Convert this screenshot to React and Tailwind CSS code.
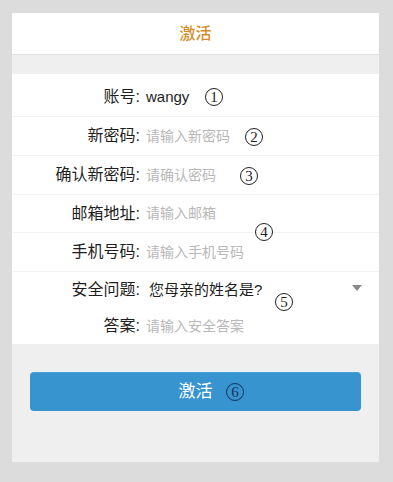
import React from 'react';

const cjk = { fontFamily: '"Liberation Sans", "Noto Sans CJK SC", sans-serif' };
const serif = { fontFamily: '"Liberation Serif", "DejaVu Serif", serif' };

const rows = [
  { label: '账号', value: 'wangy', h: 'h-[39px]' },
  { label: '新密码', placeholder: '请输入新密码', h: 'h-[39px]' },
  { label: '确认新密码', placeholder: '请确认密码', h: 'h-[39px]' },
  { label: '邮箱地址', placeholder: '请输入邮箱', h: 'h-[38px]' },
  { label: '手机号码', placeholder: '请输入手机号码', h: 'h-[39px]' },
  { label: '安全问题', value: '您母亲的姓名是?', h: 'h-[36px]', select: true },
  { label: '答案', placeholder: '请输入安全答案', h: 'h-[36px]', last: true },
];

// circled step number drawn over the form
const Mark = ({ n, className }) => (
  <span
    className={`absolute w-[18px] h-[18px] rounded-full border border-current flex items-center justify-center text-[15px] leading-none ${className}`}
    style={serif}
  >
    {n}
  </span>
);

export default function App() {
  return (
    <div className="w-[393px] h-[482px] bg-[#dcdcdc] pt-[13px] pl-[12px]" style={cjk}>
      <div className="relative w-[367px] h-[449px] bg-[#efefef] flex flex-col">
        {/* Header */}
        <div className="h-[42px] bg-white border-b border-[#e2e2e2] flex items-center justify-center">
          <span className="text-[16px] font-medium text-[#d68d28]">激活</span>
        </div>

        <div className="h-[19px]" />

        {/* Form */}
        <div className="bg-white pt-[4px]">
          {rows.map((r) => (
            <div
              key={r.label}
              className={`${r.h} flex items-center ${r.last || r.select ? '' : 'border-b border-[#f3f3f3]'}`}
            >
              <div className="w-[128px] text-right text-[16px] text-[#1e1e1e]">{r.label}:</div>
              <div className="ml-[6px] flex-1 flex items-center">
                {r.value ? (
                  <span className={`text-[15px] text-[#1e1e1e] ${r.select ? 'ml-[3px]' : ''}`}>{r.value}</span>
                ) : (
                  <span className="text-[14px] text-[#b8b8b8]">{r.placeholder}</span>
                )}
              </div>
              {r.select && (
                <svg width="10" height="6" viewBox="0 0 10 6" className="mr-[17px] -mt-[4px]">
                  <path d="M0 0 L10 0 L5 6 Z" fill="#8a8a8a" />
                </svg>
              )}
            </div>
          ))}
        </div>

        {/* Button */}
        <div className="px-[18px] pt-[28px]">
          <button className="w-full h-[39px] rounded-[4px] bg-[#3894cf] border-t border-[#4aa3dc] flex items-center justify-center text-white text-[17px]">
            激活
          </button>
        </div>

        <Mark n="1" className="left-[193px] top-[75px] text-[#222]" />
        <Mark n="2" className="left-[233px] top-[115px] text-[#222]" />
        <Mark n="3" className="left-[228px] top-[154px] text-[#222]" />
        <Mark n="4" className="left-[243px] top-[210px] text-[#222]" />
        <Mark n="5" className="left-[263px] top-[280px] text-[#222]" />
        <Mark n="6" className="left-[214px] top-[370px] text-[#12315e]" />
      </div>
    </div>
  );
}
